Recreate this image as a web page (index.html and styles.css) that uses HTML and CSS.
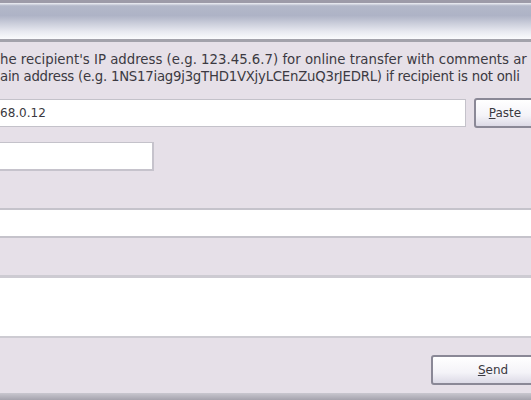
FILE: index.html
```html
<!DOCTYPE html>
<html lang="en">
<head>
  <meta charset="UTF-8">
  <title>Send</title>
  <link rel="stylesheet" href="styles.css">
</head>
<body>
<div class="window">
  <div class="titlebar"></div>
  <div class="panel">
    <div class="hint">
      <div>he recipient's IP address (e.g. 123.45.6.7) for online transfer with comments ar</div>
      <div class="tight">ain address (e.g. 1NS17iag9j3gTHD1VXjyLCEnZuQ3rJEDRL) if recipient is not onli</div>
    </div>
    <div class="row">
      <input type="text" class="address" value="68.0.12">
      <button class="btn paste"><u>P</u>aste</button>
    </div>
    <input type="text" class="amount">
    <input type="text" class="comment">
    <textarea class="message"></textarea>
    <div class="actions">
      <button class="btn send"><u>S</u>end</button>
    </div>
  </div>
  <div class="statusbar"></div>
</div>
</body>
</html>
```

FILE: styles.css
```css
html, body {
  margin: 0;
  overflow: hidden;
}
body {
  font-family: 'DejaVu Sans', sans-serif;
  font-size: 11px;
  color: #3a3840;
  background-color: #e6e0e8;
}
.window {
  width: 556px;
  height: 400px;
  display: flex;
  flex-direction: column;
}
.titlebar {
  height: 36px;
  border-top: 3px solid #9d9ba8;
  border-bottom: 3px solid #a3a2ab;
  background: linear-gradient(#eef0f4 0, #b3b8c9 8%, #aeb3c6 35%, #e9eaf1 80%, #fbfbfd 100%);
}
.panel {
  flex: 1;
  display: flex;
  flex-direction: column;
}
.hint {
  margin: 9px 0 0;
  width: 531px;
  font-size: 13.3px;
  line-height: 17px;
  white-space: nowrap;
  color: #3c3a42;
}
.hint .tight {
  letter-spacing: -0.25px;
}
.row {
  display: flex;
  gap: 8px;
  margin-top: 14px;
}
input, textarea {
  box-sizing: border-box;
  font-family: inherit;
  font-size: 12px;
  color: #3a3840;
  background: #fff;
  border: 1px solid #c4c2ca;
  margin: 0;
  padding: 0 2px 0 0;
  outline: none;
}
.address {
  width: 466px;
  height: 28px;
  border-left: none;
}
.amount {
  width: 154px;
  height: 29px;
  margin-top: 14px;
  border-left: none;
  border-right: 2px solid #c6c3cc;
  border-bottom: 2px solid #c6c3cc;
}
.comment {
  width: 100%;
  height: 30px;
  margin-top: 37px;
  border: none;
  border-top: 2px solid #c5c3cb;
  border-bottom: 2px solid #c5c3cb;
}
.message {
  width: 100%;
  height: 63px;
  margin-top: 37px;
  resize: none;
  border: none;
  border-top: 3px solid #cdcbd2;
  border-bottom: 2px solid #cdcbd2;
}
.btn {
  font-family: inherit;
  font-size: 12px;
  color: #3a3840;
  border: 2px solid #8a8896;
  border-radius: 3px;
  background: linear-gradient(#ffffff, #f4f3f8 60%, #dcdae6);
  padding: 0;
}
.paste {
  width: 62px;
  height: 30px;
  margin-top: -1px;
}
.actions {
  display: flex;
  justify-content: flex-end;
  margin-top: 17px;
}
.send {
  width: 124px;
  height: 30px;
  margin-right: 1px;
}
.statusbar {
  height: 7px;
  margin-top: auto;
  background: linear-gradient(#c9c7cf, #a5a3ad);
}
```
